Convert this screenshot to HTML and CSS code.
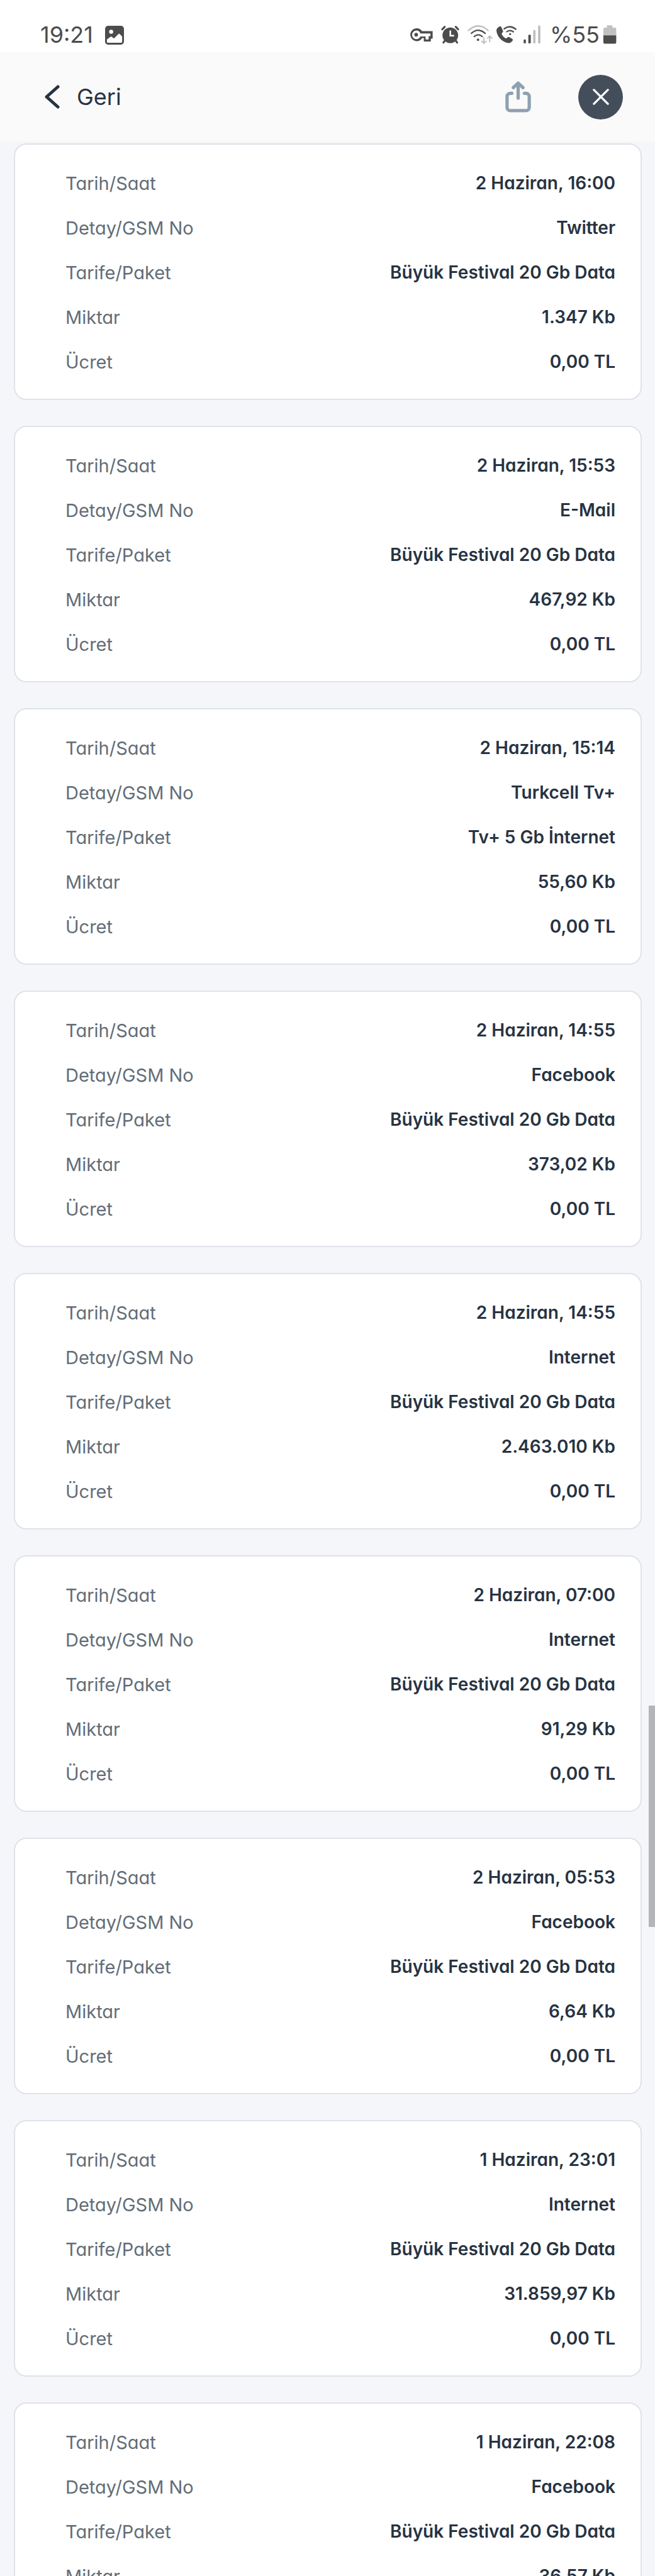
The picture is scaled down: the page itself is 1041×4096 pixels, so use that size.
FILE: index.html
```html
<!DOCTYPE html>
<html lang="tr">
<head>
<meta charset="utf-8">
<meta name="viewport" content="width=device-width, initial-scale=1">
<title>Kullanım Detayları</title>
<link rel="stylesheet" href="styles.css">
</head>
<body>
<div class="screen">
  <div class="status">
    <div class="status-left">
      <span class="status-text">19:21</span>
      <svg class="icon-picture" viewBox="0 0 31 31" aria-hidden="true"><path fill="#4c4c4c" fill-rule="evenodd" d="M5 0h21a5 5 0 0 1 5 5v21a5 5 0 0 1-5 5H5a5 5 0 0 1-5-5V5a5 5 0 0 1 5-5zM10 6.500a3.300 3.300 0 1 0 0 6.600a3.300 3.300 0 1 0 0-6.600zM3 22.500V26a2 2 0 0 0 2 2h21a2 2 0 0 0 2-2v-8.500l-4-4q-1-1-2 0L14.500 21l-3.500-3q-1-.8-2 0z"/></svg>
    </div>
    <div class="status-right">
      <svg class="icon-key" viewBox="96 120 144 108" aria-hidden="true"><path fill="#4c4c4c" fill-rule="evenodd" d="M139 141a32 32 0 0 1 28 14h53v38h-9v14h-35v-17h-8a32 32 0 1 1-29-49zM139 152a21.500 21.500 0 1 0 20 30h26v15h15v-17h9v-13h-50a21.500 21.500 0 0 0-20-15z"/><circle cx="138" cy="173" r="9" fill="#4c4c4c"/></svg>
      <svg class="icon-alarm" viewBox="240 120 138 108" aria-hidden="true"><circle cx="308" cy="176" r="39" fill="#4c4c4c"/><path fill="none" stroke="#4c4c4c" stroke-width="10" stroke-linecap="round" d="M268 146l12-12M347 146l-12-12M280 204l-6 8M336 204l6 8"/><path fill="none" stroke="#fff" stroke-width="8" d="M308 152v26h19"/></svg>
      <svg class="icon-wifi" viewBox="378 120 150 108" aria-hidden="true"><g fill="none" stroke-width="7" stroke-linecap="round"><path stroke="#bdbdbd" d="M398 152q49-45 98 0"/><path stroke="#4c4c4c" d="M413 166q34-30 68 0M427 182q20-17 40 0"/><path stroke="#bdbdbd" stroke-width="6" d="M475 188v27M464 205l11 11 11-11M504 208v-27M493 191l11-11 11 11"/></g><circle cx="446" cy="198" r="6" fill="#4c4c4c"/></svg>
      <svg class="icon-call" viewBox="528 120 126 108" aria-hidden="true"><path fill="#4c4c4c" d="M553 132q-17 8-16 22c3 28 28 57 60 60q10 0 18-10c3-5 3-9-1-11l-14-8q-5-3-9 1l-7 6q-16-8-22-24l6-7q3-4 1-8l-8-17q-2-6-8-4z"/><path fill="none" stroke="#4c4c4c" stroke-width="7" stroke-linecap="round" d="M575 144q28-21 57 2M588 158q16-11 32 1"/><circle cx="604" cy="170" r="5" fill="#4c4c4c"/></svg>
      <svg class="icon-signal" viewBox="654 120 120 108" aria-hidden="true"><g fill="#4c4c4c"><rect x="670" y="196" width="11" height="20" rx="4"/><rect x="693" y="173" width="12" height="43" rx="4"/></g><g fill="#bdbdbd"><rect x="717" y="150" width="11" height="66" rx="4"/><rect x="741" y="128" width="11" height="88" rx="4"/></g></svg>
      <span class="status-text">%55</span>
      <svg class="icon-battery" viewBox="1056 120 75 108" aria-hidden="true"><path fill="#c1c1c1" d="M1062 178v-34q0-6 6-6h11v-8q0-4 4-4h20q4 0 4 4v8h13q6 0 6 6v34z"/><path fill="#4c4c4c" d="M1062 176h64v35q0 7-7 7h-50q-7 0-7-7z"/></svg>
    </div>
  </div>

  <header class="topbar">
    <button class="back" type="button">
      <svg class="icon-back" viewBox="0 0 24 38" aria-hidden="true"><path fill="none" stroke="#273342" stroke-width="5" stroke-linecap="round" stroke-linejoin="round" d="M21 3L3 19l18 16"/></svg>
      <span>Geri</span>
    </button>
    <div class="actions">
      <button class="share" type="button" aria-label="Paylaş">
        <svg class="icon-share" viewBox="0 0 43 52" aria-hidden="true"><path fill="none" stroke="#8fa1b0" stroke-width="5.500" stroke-linecap="round" stroke-linejoin="round" d="M11 20H8.500a5.500 5.500 0 0 0-5.500 5.500v18a5.500 5.500 0 0 0 5.500 5.500h26a5.500 5.500 0 0 0 5.500-5.500v-18a5.500 5.500 0 0 0-5.500-5.500H32M21.500 28V4M13.500 10.500l8-7.500 8 7.500"/></svg>
      </button>
      <button class="close" type="button" aria-label="Kapat">
        <svg class="icon-close" viewBox="0 0 27 27" aria-hidden="true"><path fill="none" stroke="#fff" stroke-width="3.500" stroke-linecap="round" d="M2 2l23 23M25 2L2 25"/></svg>
      </button>
    </div>
  </header>

  <main class="list">
    <dl class="card">
      <div class="row"><dt>Tarih/Saat</dt><dd>2 Haziran, 16:00</dd></div>
      <div class="row"><dt>Detay/GSM No</dt><dd>Twitter</dd></div>
      <div class="row"><dt>Tarife/Paket</dt><dd>Büyük Festival 20 Gb Data</dd></div>
      <div class="row"><dt>Miktar</dt><dd>1.347 Kb</dd></div>
      <div class="row"><dt>Ücret</dt><dd>0,00 TL</dd></div>
    </dl>
    <dl class="card">
      <div class="row"><dt>Tarih/Saat</dt><dd>2 Haziran, 15:53</dd></div>
      <div class="row"><dt>Detay/GSM No</dt><dd>E-Mail</dd></div>
      <div class="row"><dt>Tarife/Paket</dt><dd>Büyük Festival 20 Gb Data</dd></div>
      <div class="row"><dt>Miktar</dt><dd>467,92 Kb</dd></div>
      <div class="row"><dt>Ücret</dt><dd>0,00 TL</dd></div>
    </dl>
    <dl class="card">
      <div class="row"><dt>Tarih/Saat</dt><dd>2 Haziran, 15:14</dd></div>
      <div class="row"><dt>Detay/GSM No</dt><dd>Turkcell Tv+</dd></div>
      <div class="row"><dt>Tarife/Paket</dt><dd>Tv+ 5 Gb İnternet</dd></div>
      <div class="row"><dt>Miktar</dt><dd>55,60 Kb</dd></div>
      <div class="row"><dt>Ücret</dt><dd>0,00 TL</dd></div>
    </dl>
    <dl class="card">
      <div class="row"><dt>Tarih/Saat</dt><dd>2 Haziran, 14:55</dd></div>
      <div class="row"><dt>Detay/GSM No</dt><dd>Facebook</dd></div>
      <div class="row"><dt>Tarife/Paket</dt><dd>Büyük Festival 20 Gb Data</dd></div>
      <div class="row"><dt>Miktar</dt><dd>373,02 Kb</dd></div>
      <div class="row"><dt>Ücret</dt><dd>0,00 TL</dd></div>
    </dl>
    <dl class="card">
      <div class="row"><dt>Tarih/Saat</dt><dd>2 Haziran, 14:55</dd></div>
      <div class="row"><dt>Detay/GSM No</dt><dd>Internet</dd></div>
      <div class="row"><dt>Tarife/Paket</dt><dd>Büyük Festival 20 Gb Data</dd></div>
      <div class="row"><dt>Miktar</dt><dd>2.463.010 Kb</dd></div>
      <div class="row"><dt>Ücret</dt><dd>0,00 TL</dd></div>
    </dl>
    <dl class="card">
      <div class="row"><dt>Tarih/Saat</dt><dd>2 Haziran, 07:00</dd></div>
      <div class="row"><dt>Detay/GSM No</dt><dd>Internet</dd></div>
      <div class="row"><dt>Tarife/Paket</dt><dd>Büyük Festival 20 Gb Data</dd></div>
      <div class="row"><dt>Miktar</dt><dd>91,29 Kb</dd></div>
      <div class="row"><dt>Ücret</dt><dd>0,00 TL</dd></div>
    </dl>
    <dl class="card">
      <div class="row"><dt>Tarih/Saat</dt><dd>2 Haziran, 05:53</dd></div>
      <div class="row"><dt>Detay/GSM No</dt><dd>Facebook</dd></div>
      <div class="row"><dt>Tarife/Paket</dt><dd>Büyük Festival 20 Gb Data</dd></div>
      <div class="row"><dt>Miktar</dt><dd>6,64 Kb</dd></div>
      <div class="row"><dt>Ücret</dt><dd>0,00 TL</dd></div>
    </dl>
    <dl class="card">
      <div class="row"><dt>Tarih/Saat</dt><dd>1 Haziran, 23:01</dd></div>
      <div class="row"><dt>Detay/GSM No</dt><dd>Internet</dd></div>
      <div class="row"><dt>Tarife/Paket</dt><dd>Büyük Festival 20 Gb Data</dd></div>
      <div class="row"><dt>Miktar</dt><dd>31.859,97 Kb</dd></div>
      <div class="row"><dt>Ücret</dt><dd>0,00 TL</dd></div>
    </dl>
    <dl class="card">
      <div class="row"><dt>Tarih/Saat</dt><dd>1 Haziran, 22:08</dd></div>
      <div class="row"><dt>Detay/GSM No</dt><dd>Facebook</dd></div>
      <div class="row"><dt>Tarife/Paket</dt><dd>Büyük Festival 20 Gb Data</dd></div>
      <div class="row"><dt>Miktar</dt><dd>36,57 Kb</dd></div>
      <div class="row"><dt>Ücret</dt><dd>0,00 TL</dd></div>
    </dl>
  </main>
  <div class="scroll-thumb"></div>
</div>
</body>
</html>
```
FILE: styles.css
```css
* {
  box-sizing: border-box;
}

body {
  margin: 0;
  background: #f5f6f9;
  color: #273342;
  font-family: Inter, "Liberation Sans", sans-serif;
  font-feature-settings: "cv11";
}

button {
  padding: 0;
  border: 0;
  background: none;
  color: inherit;
  font: inherit;
  font-feature-settings: inherit;
}

svg {
  display: block;
  flex: none;
}

.screen {
  position: relative;
  display: flex;
  flex-direction: column;
  height: 100vh;
  overflow: hidden;
}

/* Phone status bar */
.status {
  flex: none;
  display: flex;
  justify-content: space-between;
  padding: 38px 60px 10px 64px;
  background: #fff;
  color: #4c4c4c;
}

.status-left,
.status-right {
  display: flex;
  align-items: center;
  height: 35px;
}

.status-left {
  gap: 19px;
}

.status-right .status-text {
  padding: 0 4px 0 8px;
}

.status-text {
  font-size: 36px;
  line-height: 35px;
}

.icon-picture { width: 30px; height: 30px; }
.icon-key { width: 46px; height: 35px; }
.icon-alarm { width: 44px; height: 35px; }
.icon-wifi { width: 48px; height: 35px; }
.icon-call { width: 41px; height: 35px; }
.icon-signal { width: 39px; height: 35px; }
.icon-battery { width: 24px; height: 35px; }

/* Navigation bar */
.topbar {
  flex: none;
  display: flex;
  align-items: center;
  justify-content: space-between;
  height: 142px;
  padding: 0 51px 0 71px;
  background: #fafafa;
}

.back {
  display: flex;
  align-items: center;
  gap: 27px;
  font-size: 36px;
}

.icon-back { width: 24px; height: 38px; }

.actions {
  display: flex;
  align-items: center;
  gap: 75px;
}

.icon-share { width: 41px; height: 50px; }

.close {
  display: flex;
  align-items: center;
  justify-content: center;
  width: 71px;
  height: 71px;
  border-radius: 50%;
  background: #434e5a;
}

.icon-close { width: 26px; height: 26px; }

/* Usage records */
.list {
  flex: 1;
  min-height: 0;
  display: flex;
  flex-direction: column;
  gap: 41px;
  padding: 3px 21px 0 22px;
  overflow: hidden;
}

.card {
  flex: none;
  margin: 0;
  padding: 26px 40px 23px 80px;
  border: 2px solid #e0e2eb;
  border-radius: 20px;
  background: #fff;
}

.row {
  display: flex;
  justify-content: space-between;
  font-size: 29px;
  line-height: 71px;
}

dt {
  color: #626d77;
}

dd {
  margin: 0;
  font-size: 28px;
  font-weight: 600;
}

.scroll-thumb {
  position: absolute;
  top: 66.2%;
  right: 0;
  width: 10px;
  height: 8.6%;
  background: #b4b5b7;
}
```
